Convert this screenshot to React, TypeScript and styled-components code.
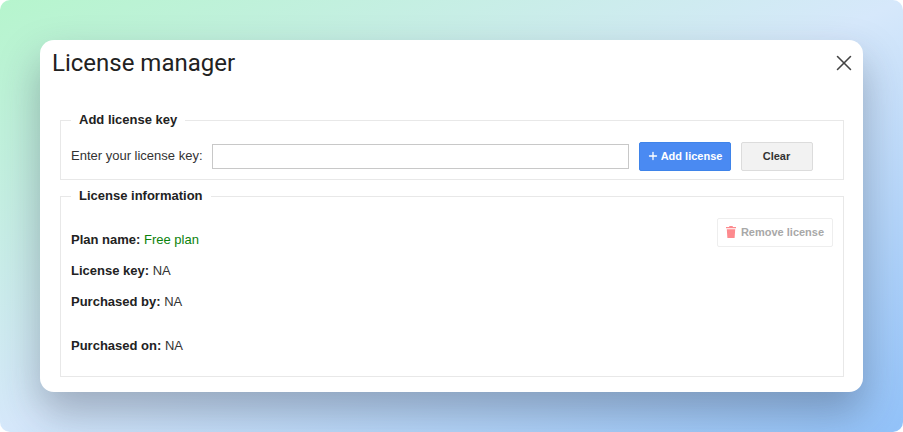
import styled, { createGlobalStyle } from "styled-components";
import { X, Plus } from "lucide-react";

const GlobalStyle = createGlobalStyle`
  html, body {
    margin: 0;
    padding: 0;
    background: #fff;
  }
  body {
    font-family: "Liberation Sans", Arial, sans-serif;
  }
`;

const TrashIcon = () => (
  <svg width="10" height="12" viewBox="0 0 10 12" fill="#fd8a8e">
    <path d="M3.5 0h3l.5 1H10v1.3H0V1h3zM.8 3.2h8.4L8.6 12H1.4z" />
  </svg>
);

export default function App() {
  return (
    <>
      <GlobalStyle />
      <Backdrop>
        <Modal>
          <Header>
            <Title>License manager</Title>
            <CloseButton>
              <X size={26} strokeWidth={1.4} />
            </CloseButton>
          </Header>
          <AddSection>
            <Legend>Add license key</Legend>
            <Label>Enter your license key:</Label>
            <KeyInput />
            <PrimaryButton>
              <Plus size={12} strokeWidth={2.6} />
              Add license
            </PrimaryButton>
            <ClearButton>Clear</ClearButton>
          </AddSection>
          <InfoSection>
            <Legend>License information</Legend>
            <InfoList>
              <InfoRow>
                <b>Plan name:</b> <Plan>Free plan</Plan>
              </InfoRow>
              <InfoRow>
                <b>License key:</b> NA
              </InfoRow>
              <InfoRow $gap={28}>
                <b>Purchased by:</b> NA
              </InfoRow>
              <InfoRow>
                <b>Purchased on:</b> NA
              </InfoRow>
            </InfoList>
            <RemoveButton disabled>
              <TrashIcon />
              Remove license
            </RemoveButton>
          </InfoSection>
        </Modal>
      </Backdrop>
    </>
  );
}

const Backdrop = styled.div`
  box-sizing: border-box;
  width: 903px;
  height: 432px;
  padding: 40px;
  border-radius: 10px;
  overflow: hidden;
  background: linear-gradient(to bottom right, #b6f5cd 0%, #d6e8fb 50%, #92c2f9 100%);
`;

const Modal = styled.div`
  box-sizing: border-box;
  width: 823px;
  height: 352px;
  padding: 0 19px 0 20px;
  background: #fff;
  border-radius: 14px;
  box-shadow: 0 20px 40px rgba(40, 50, 70, 0.34);
`;

const Header = styled.div`
  display: flex;
  justify-content: space-between;
  align-items: flex-start;
  height: 72px;
  margin: 0 -9px;
`;

const Title = styled.h1`
  margin: 7px 0 0 1px;
  font-family: Roboto, "Liberation Sans", sans-serif;
  font-size: 24px;
  line-height: 32px;
  font-weight: 400;
  color: #222;
`;

const CloseButton = styled.button`
  display: flex;
  margin: 10px -4px 0 0;
  padding: 0;
  border: none;
  background: none;
  color: #444;
`;

const Section = styled.fieldset`
  box-sizing: border-box;
  margin: 0;
  min-width: 0;
  padding: 0 10px;
  border: 1px solid #e8e8e8;
`;

const Legend = styled.legend`
  padding: 0 8px;
  font-size: 13px;
  line-height: 16px;
  font-weight: 700;
  color: #222;
`;

const AddSection = styled(Section)`
  display: flex;
  align-items: center;
  height: 68px;
  padding-top: 6px;
`;

const Label = styled.label`
  padding-bottom: 2px;
  font-size: 13px;
  color: #333;
`;

const KeyInput = styled.input`
  box-sizing: border-box;
  width: 417px;
  height: 25px;
  margin-left: 9px;
  border: 1px solid #c8c8c8;
  background: #fff;
`;

const Button = styled.button`
  box-sizing: border-box;
  display: inline-flex;
  align-items: center;
  justify-content: center;
  height: 29px;
  padding: 0 0 2px;
  font-family: inherit;
  font-size: 11px;
  font-weight: 700;
  border-radius: 2px;
`;

const PrimaryButton = styled(Button)`
  gap: 2px;
  width: 92px;
  margin-left: 10px;
  border: 1px solid #3f84ea;
  background: #4a8af2;
  color: #fff;
`;

const ClearButton = styled(Button)`
  width: 72px;
  margin-left: 10px;
  border: 1px solid #dcdcdc;
  background: #f2f2f2;
  color: #333;
`;

const InfoSection = styled(Section)`
  display: flex;
  justify-content: space-between;
  align-items: flex-start;
  height: 189px;
  margin-top: 8px;
`;

const InfoList = styled.div`
  display: flex;
  flex-direction: column;
  padding-top: 28px;
`;

const InfoRow = styled.div<{ $gap?: number }>`
  margin-bottom: ${(p) => p.$gap ?? 15}px;
  font-size: 13px;
  line-height: 16px;
  color: #333;

  b {
    color: #222;
  }
`;

const Plan = styled.span`
  color: #0b820b;
`;

const RemoveButton = styled(Button)`
  gap: 5px;
  width: 116px;
  margin-top: 14px;
  background: #fff;
  border: 1px solid #eeeeee;
  color: #a8a8a8;
`;
